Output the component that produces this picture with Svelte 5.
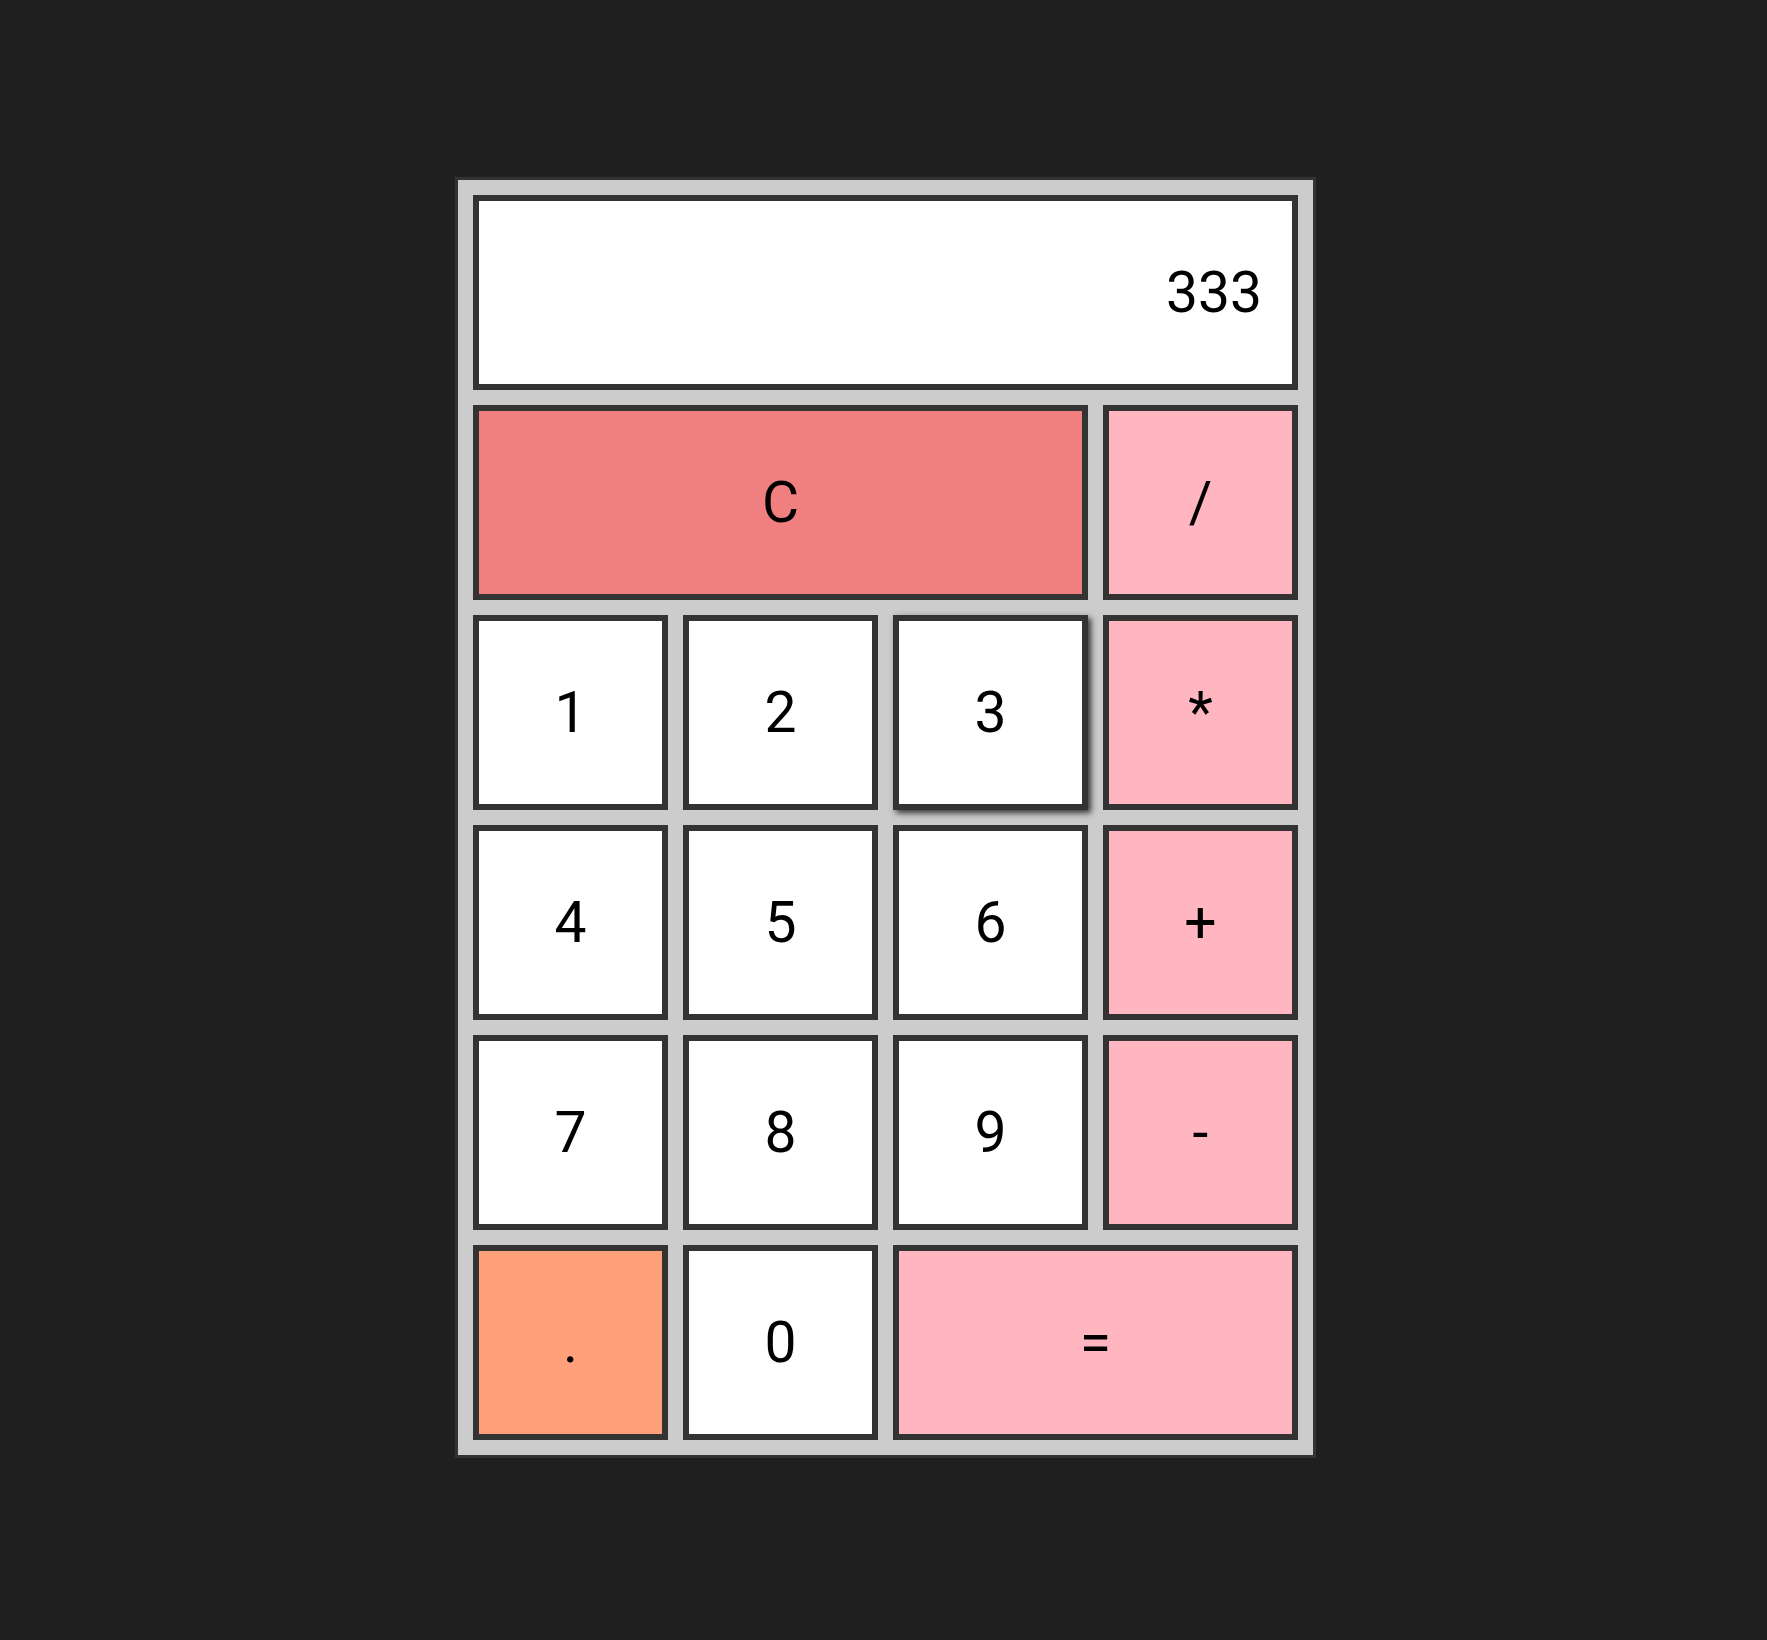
<script>
  const keys = [
    { label: 'C', kind: 'clear' },
    { label: '/', kind: 'operator' },
    { label: '1', kind: 'digit' },
    { label: '2', kind: 'digit' },
    { label: '3', kind: 'digit' },
    { label: '*', kind: 'operator' },
    { label: '4', kind: 'digit' },
    { label: '5', kind: 'digit' },
    { label: '6', kind: 'digit' },
    { label: '+', kind: 'operator' },
    { label: '7', kind: 'digit' },
    { label: '8', kind: 'digit' },
    { label: '9', kind: 'digit' },
    { label: '-', kind: 'operator' },
    { label: '.', kind: 'point' },
    { label: '0', kind: 'digit' },
    { label: '=', kind: 'operator equals' },
  ];

  let display = $state('333');
  let current = $state('3');
  let stored = null;
  let pending = null;
  let fresh = false;

  function compute(a, op, b) {
    if (op === '+') return a + b;
    if (op === '-') return a - b;
    if (op === '*') return a * b;
    return a / b;
  }

  function press(label) {
    current = label;
    if (label === 'C') {
      display = '0';
      stored = null;
      pending = null;
      fresh = false;
    } else if (label === '.') {
      if (fresh) display = '0';
      fresh = false;
      if (!display.includes('.')) display += '.';
    } else if (label >= '0' && label <= '9') {
      display = fresh || display === '0' ? label : display + label;
      fresh = false;
    } else {
      if (pending && !fresh) display = String(compute(stored, pending, Number(display)));
      stored = Number(display);
      pending = label === '=' ? null : label;
      fresh = true;
    }
  }
</script>

<main class="page">
  <div class="calculator">
    <output class="display" aria-label="Result">{display}</output>
    {#each keys as key (key.label)}
      <button
        type="button"
        class="key {key.kind}"
        class:current={current === key.label}
        onclick={() => press(key.label)}>{key.label}</button>
    {/each}
  </div>
</main>

<style>
  :global(body) {
    margin: 0;
    background: #1f1f1f;
  }

  .page {
    box-sizing: border-box;
    min-height: 100vh;
    padding: 0 0 5px 4px;
    display: flex;
    align-items: center;
    justify-content: center;
    font-family: Roboto, sans-serif;
  }

  .calculator {
    display: grid;
    grid-template-columns: repeat(4, 195px);
    grid-auto-rows: 195px;
    gap: 15px;
    padding: 15px;
    border: 3px solid #333;
    background: #ccc;
  }

  .display,
  .key {
    box-sizing: border-box;
    border: 6px solid #333;
    background: #fff;
    color: #000;
    font-family: inherit;
    font-size: 57px;
    line-height: 66px;
  }

  .display {
    grid-column: 1 / -1;
    display: flex;
    align-items: center;
    justify-content: flex-end;
    padding: 0 30px;
    overflow: hidden;
  }

  .key {
    margin: 0;
    padding: 0;
    border-radius: 0;
    cursor: pointer;
  }

  .clear {
    grid-column: span 3;
    background: #f08080;
  }

  .operator {
    background: #ffb6c1;
  }

  .equals {
    grid-column: span 2;
  }

  .point {
    background: #ffa07a;
  }

  .current,
  .key:hover {
    box-shadow: 3px 3px 6px #333;
  }
</style>
